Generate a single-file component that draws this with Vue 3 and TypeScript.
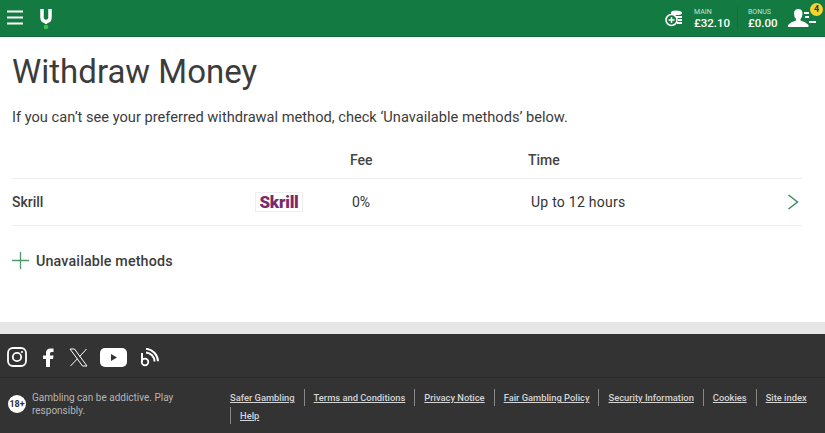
<template>
  <div class="page">
    <header class="topbar">
      <div class="bar-left">
        <svg class="burger" width="16" height="15" viewBox="0 0 16 15">
          <path d="M0 1.500h16M0 7.500h16M0 13.500h16" stroke="#fff" stroke-width="2" />
        </svg>
        <svg class="logo" width="12" height="21" viewBox="0 0 12 21">
          <path d="M2 0v8q0 4.500 4 4.500T10 8V0" fill="none" stroke="#fff" stroke-width="3.500" />
          <path d="M6 12v3" stroke="#fff" stroke-width="2.500" />
          <circle cx="6" cy="18" r="2.300" fill="#3fc24a" />
        </svg>
      </div>
      <div class="bar-right">
        <svg class="coins" width="18" height="18" viewBox="0 0 18 18">
          <path d="M6 3.500q0-2 5-2t6 2v1q-1 1.500-6 1.500t-5-1.500z" fill="#fff" />
          <circle cx="6.500" cy="11" r="5.500" fill="none" stroke="#fff" stroke-width="1.500" />
          <path d="M6.500 8v6M3.500 11h6" stroke="#fff" stroke-width="1.500" />
          <path d="M11 8h6M13 11h4M12 14h5" stroke="#fff" stroke-width="2" />
        </svg>
        <div class="balance">
          <span class="bal-label">MAIN</span>
          <span class="bal-value">£32.10</span>
        </div>
        <div class="bal-sep"></div>
        <div class="balance">
          <span class="bal-label">BONUS</span>
          <span class="bal-value">£0.00</span>
        </div>
        <div class="account">
          <svg width="29" height="20" viewBox="0 0 29 20">
            <path d="M10.500 1q4 0 4 4.500 0 3.500-2 5.500v1.500q5 1 8 4.500V19H0v-2q3-3.500 8-4.500V11q-2-2-2-5.500 0-4.500 4.500-4.500z" fill="#fff" />
            <path d="M16 5h5M17 9h4M21 14h7" stroke="#fff" stroke-width="2" />
          </svg>
          <span class="badge">4</span>
        </div>
      </div>
    </header>

    <main class="content">
      <h1 class="title">Withdraw Money</h1>
      <p class="intro">If you can’t see your preferred withdrawal method, check ‘Unavailable methods’ below.</p>

      <div class="table-head">
        <span class="col-method"></span>
        <span class="col-logo"></span>
        <span class="col-fee">Fee</span>
        <span class="col-time">Time</span>
      </div>
      <div class="table-row">
        <span class="col-method name">Skrill</span>
        <span class="col-logo"><span class="skrill">Skrill</span></span>
        <span class="col-fee val-fee">0%</span>
        <span class="col-time val-time">Up to 12 hours</span>
        <svg class="chevron" width="12" height="18" viewBox="0 0 12 18">
          <path d="M1.500 2l9 7-9 7" fill="none" stroke="#3f8a63" stroke-width="1.500" />
        </svg>
      </div>

      <div class="unavailable">
        <svg width="17" height="17" viewBox="0 0 17 17">
          <path d="M8.500 0v17M0 8.500h17" stroke="#4f9a6c" stroke-width="1.300" />
        </svg>
        <span>Unavailable methods</span>
      </div>
    </main>

    <footer class="footer">
      <div class="social">
        <svg class="ig" width="20" height="20" viewBox="0 0 20 20">
          <rect x="1" y="1" width="18" height="18" rx="5" fill="none" stroke="#fff" stroke-width="1.800" />
          <circle cx="10" cy="10" r="4.200" fill="none" stroke="#fff" stroke-width="1.800" />
          <circle cx="15" cy="5" r="1.100" fill="#fff" />
        </svg>
        <svg class="fb" width="11" height="19" viewBox="0 0 11 19">
          <path d="M3 19v-8H0V7.500h3V5q0-4.500 4.500-4.500H10.500V4H8.500Q7 4 7 5.500v2h3.500L10 11H7v8z" fill="#fff" />
        </svg>
        <svg class="x" width="19" height="19" viewBox="0 0 19 19">
          <path d="M1 1h4.500l12.500 17h-4.500zM17.500 1L10.500 8.700M8.500 10.700L1.500 18" fill="none" stroke="#fff" stroke-width="1" />
        </svg>
        <svg class="yt" width="27" height="19" viewBox="0 0 27 19">
          <rect width="27" height="19" rx="5" fill="#fff" />
          <path d="M11 6l6 3.500-6 3.500z" fill="#333" />
        </svg>
        <svg class="rss" width="19" height="19" viewBox="0 0 19 19">
          <circle cx="5" cy="14" r="3.300" fill="none" stroke="#fff" stroke-width="1.800" />
          <path d="M2 14V5M6 4.500a9 9 0 0 1 8.500 9M6 0.800a13 13 0 0 1 12 12.500" fill="none" stroke="#fff" stroke-width="2" />
        </svg>
      </div>
      <div class="legal">
        <div class="warning">
          <span class="age">18+</span>
          <span class="warn-text">Gambling can be addictive. Play responsibly.</span>
        </div>
        <nav class="links">
          <a v-for="link in links" :key="link" class="link"><span>{{ link }}</span></a>
        </nav>
      </div>
    </footer>
  </div>
</template>

<script setup lang="ts">
const links: string[] = [
  'Safer Gambling',
  'Terms and Conditions',
  'Privacy Notice',
  'Fair Gambling Policy',
  'Security Information',
  'Cookies',
  'Site index',
  'Help',
]
</script>

<style>
html,
body {
  margin: 0;
  overflow: hidden;
}
</style>

<style scoped>
.page {
  width: 825px;
  height: 433px;
  display: flex;
  flex-direction: column;
  font-family: Roboto, "Liberation Sans", sans-serif;
  background: #e6e6e6;
  color: #333;
}

.topbar {
  height: 37px;
  flex: none;
  display: flex;
  justify-content: space-between;
  align-items: center;
  background: #137b41;
  border-bottom: 1px solid #0f6a38;
  box-sizing: border-box;
}

.bar-left {
  display: flex;
  align-items: flex-start;
  padding-left: 7px;
  gap: 17px;
  height: 100%;
}

.burger {
  margin-top: 10px;
}

.logo {
  margin-top: 9px;
}

.bar-right {
  display: flex;
  align-items: center;
  color: #fff;
}

.coins {
  margin-right: 11px;
}

.balance {
  display: flex;
  flex-direction: column;
  width: 36px;
  margin-top: 2px;
}

.bal-label {
  font-size: 7px;
  line-height: 8px;
  color: #c9e0d2;
}

.bal-value {
  font-size: 11.500px;
  line-height: 14px;
  font-weight: 500;
}

.bal-sep {
  width: 1px;
  height: 24px;
  background: #1a6b3e;
  margin: 0 10px 0 7px;
}

.account {
  position: relative;
  display: flex;
  margin: 0 8px 0 4px;
  width: 29px;
}

.badge {
  position: absolute;
  top: -5px;
  right: -6px;
  width: 13px;
  height: 13px;
  border-radius: 50%;
  background: #f6d42c;
  color: #333;
  font-size: 9px;
  font-weight: 700;
  line-height: 13px;
  text-align: center;
}

.content {
  flex: none;
  height: 285px;
  box-sizing: border-box;
  background: #fff;
  padding: 0 23px 0 12px;
}

.title {
  margin: 0;
  padding-top: 14px;
  font-size: 33px;
  line-height: 42px;
  font-weight: 400;
  color: #3c3c3c;
}

.intro {
  margin: 14px 0 0;
  font-size: 14.630px;
  line-height: 20px;
  color: #3c3c3c;
}

.table-head,
.table-row {
  display: flex;
  align-items: center;
  position: relative;
}

.table-head {
  margin-top: 19px;
  height: 27px;
  padding-bottom: 5px;
  font-size: 14px;
  font-weight: 500;
  border-bottom: 1px solid #efefef;
  color: #444;
}

.table-row {
  height: 46px;
  border-bottom: 1px solid #efefef;
  font-size: 14px;
}

.col-method {
  width: 243px;
}

.col-logo {
  width: 95px;
  display: flex;
}

.col-fee {
  width: 178px;
}

.name {
  font-weight: 500;
  color: #3c3c3c;
}

.skrill {
  box-sizing: border-box;
  width: 48px;
  height: 20px;
  border: 1px solid #eee;
  font-size: 17px;
  font-weight: 900;
  line-height: 18px;
  letter-spacing: -0.2px;
  text-align: center;
  color: #7a2a6c;
}

.val-fee {
  padding-left: 2px;
  box-sizing: border-box;
}

.val-time {
  padding-left: 3px;
  letter-spacing: 0.25px;
}

.chevron {
  position: absolute;
  right: 3px;
  top: 14px;
}

.unavailable {
  display: flex;
  align-items: center;
  gap: 7px;
  margin-top: 26px;
  font-size: 14.300px;
  font-weight: 500;
  letter-spacing: 0.15px;
  color: #3c3c3c;
}

.footer {
  margin-top: 12px;
  flex: 1;
  background: #333;
  display: flex;
  flex-direction: column;
}

.social {
  height: 44px;
  flex: none;
  box-sizing: border-box;
  display: flex;
  align-items: center;
  padding: 3px 0 0 7px;
  border-bottom: 1px solid #2c2c2c;
}

.fb {
  margin-left: 16px;
}

.x {
  margin-left: 15px;
}

.yt {
  margin-left: 12px;
}

.rss {
  margin-left: 13px;
}

.legal {
  display: flex;
  padding: 13px 0 0 8px;
}

.warning {
  width: 222px;
  flex: none;
  display: flex;
  align-items: center;
  align-self: flex-start;
  gap: 6px;
}

.age {
  flex: none;
  width: 18px;
  height: 18px;
  border-radius: 50%;
  background: #fff;
  color: #333;
  font-size: 9px;
  font-weight: 700;
  line-height: 18px;
  text-align: center;
}

.warn-text {
  width: 145px;
  font-size: 10px;
  line-height: 13px;
  color: #b5b5b5;
}

.links {
  display: flex;
  flex-wrap: wrap;
  row-gap: 1px;
  margin-top: -2px;
}

.link {
  font-size: 9.350px;
  line-height: 17px;
  font-weight: 500;
  color: #d4d4d4;
  padding: 0 9px;
  border-left: 1px solid #888;
}

.link span {
  text-decoration: underline;
}

.link:first-child {
  border-left: 0;
  padding-left: 0;
}
</style>
